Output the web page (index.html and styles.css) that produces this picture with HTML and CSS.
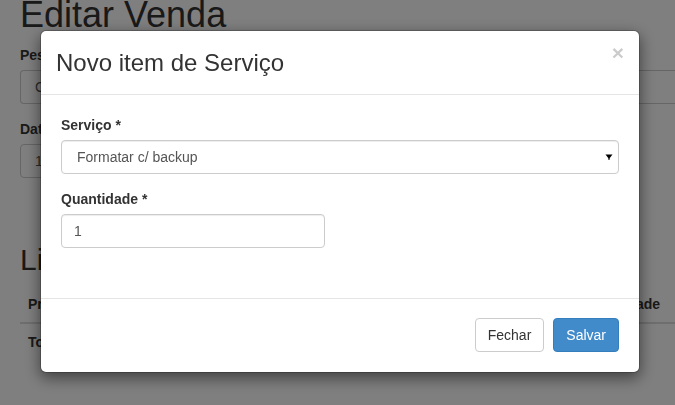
FILE: index.html
```html
<!DOCTYPE html>
<html lang="pt-BR">
<head>
<meta charset="utf-8">
<title>Editar Venda</title>
<link rel="stylesheet" href="styles.css">
</head>
<body>
<div class="page">
  <h1 class="page-title">Editar Venda</h1>
  <div class="form-group">
    <label class="bg-label">Pessoa</label>
    <div class="bg-control bg-wide">Carlos Silva</div>
  </div>
  <div class="form-group">
    <label class="bg-label">Data</label>
    <div class="bg-control bg-narrow">12/05/2017</div>
  </div>
  <h2 class="section-title">Lista de Itens</h2>
  <table class="items">
    <thead>
      <tr><th class="col-prod">Produto</th><th class="col-qtd">Quantidade</th><th class="col-rest"></th></tr>
    </thead>
    <tbody>
      <tr><td class="col-prod"><strong>Total</strong></td><td class="col-qtd"></td><td class="col-rest"></td></tr>
    </tbody>
  </table>
</div>

<div class="backdrop"></div>

<div class="modal">
  <div class="modal-header">
    <h3 class="modal-title">Novo item de Serviço</h3>
    <button type="button" class="close">×</button>
  </div>
  <div class="modal-body">
    <div class="form-group">
      <label class="field-label" for="servico">Serviço *</label>
      <div class="select-wrap">
        <select id="servico" class="form-control select">
          <option>Formatar c/ backup</option>
        </select>
        <svg class="select-arrow" width="8" height="7" viewBox="0 0 8 7" aria-hidden="true">
          <path d="M0.5 0.5H7.5L4 5Z" fill="#000"/>
          <rect x="3.5" y="4" width="1" height="2" fill="#000"/>
        </svg>
      </div>
    </div>
    <div class="form-group">
      <label class="field-label" for="qtd">Quantidade *</label>
      <input id="qtd" class="form-control form-short" type="text" value="1">
    </div>
  </div>
  <div class="modal-footer">
    <button type="button" class="btn btn-default">Fechar</button>
    <button type="button" class="btn btn-primary">Salvar</button>
  </div>
</div>
</body>
</html>
```
FILE: styles.css
```css
* { box-sizing: border-box; }

html, body {
  margin: 0;
  height: 405px;
  overflow: hidden;
}

body {
  background: #fff;
  color: #333;
  font-family: "Liberation Sans", Arial, sans-serif;
  font-size: 14px;
  line-height: 20px;
}

.page {
  padding: 0 0 0 20px;
  width: 675px;
}

.page-title {
  margin: 0 0 15px;
  font-size: 36px;
  font-weight: 500;
  line-height: 30px;
}

.form-group {
  margin-bottom: 15px;
}

.bg-label,
.field-label {
  display: block;
  margin-bottom: 5px;
  font-weight: bold;
  line-height: 20px;
}

.bg-control {
  height: 34px;
  padding: 6px 14px;
  border: 1px solid #ccc;
  border-radius: 4px;
  color: #555;
}

.bg-wide {
  width: 100%;
  border-right-width: 0;
  border-radius: 4px 0 0 4px;
}

.bg-narrow { width: 200px; }

.section-title {
  margin: 65px 0 10px;
  font-size: 30px;
  font-weight: 500;
  line-height: 33px;
}

.items {
  border-collapse: collapse;
  table-layout: fixed;
  width: 100%;
}

.items th,
.items td {
  padding: 8px;
  text-align: left;
  line-height: 20px;
}

.items th {
  border-bottom: 2px solid #ddd;
}

.items td {
  border-top: 1px solid #ddd;
}

.items .col-prod { width: 555px; }
.items .col-qtd { width: 93px; }
.items .col-rest { padding: 0; }

.backdrop {
  position: fixed;
  inset: 0;
  background: rgba(0, 0, 0, 0.5);
}

.modal {
  position: fixed;
  top: 30px;
  left: 40px;
  width: 600px;
  background: #fff;
  background-clip: padding-box;
  border: 1px solid rgba(0, 0, 0, 0.2);
  border-radius: 6px;
  box-shadow: 0 5px 15px rgba(0, 0, 0, 0.5);
}

.modal-header {
  display: flex;
  justify-content: space-between;
  align-items: flex-start;
  padding: 15px;
  border-bottom: 1px solid #e5e5e5;
}

.modal-title {
  margin: 0;
  font-size: 24px;
  font-weight: 500;
  line-height: 33px;
  color: #333;
}

.close {
  margin-top: -4px;
  padding: 0;
  border: 0;
  background: none;
  font-family: "Liberation Sans", Arial, sans-serif;
  font-size: 21px;
  font-weight: bold;
  line-height: 1;
  color: #000;
  opacity: 0.2;
  text-shadow: 0 1px 0 #fff;
}

.modal-body {
  padding: 20px;
}

.form-control {
  display: block;
  width: 100%;
  height: 34px;
  padding: 6px 12px;
  font-family: "Liberation Sans", Arial, sans-serif;
  font-size: 14px;
  line-height: 20px;
  color: #555;
  background: #fff;
  border: 1px solid #ccc;
  border-radius: 4px;
  box-shadow: inset 0 1px 1px rgba(0, 0, 0, 0.075);
}

.select-wrap {
  position: relative;
}

.select {
  appearance: none;
  -webkit-appearance: none;
  padding-left: 15px;
}

.select-arrow {
  position: absolute;
  right: 6px;
  top: 14px;
}

.form-short {
  width: 264px;
}

.modal-footer {
  display: flex;
  justify-content: flex-end;
  gap: 9px;
  margin-top: 15px;
  padding: 19px 20px 20px;
  border-top: 1px solid #e5e5e5;
}

.btn {
  padding: 6px 12px;
  font-family: "Liberation Sans", Arial, sans-serif;
  font-size: 14px;
  line-height: 20px;
  border: 1px solid transparent;
  border-radius: 4px;
}

.btn-default {
  color: #333;
  background: #fff;
  border-color: #ccc;
}

.btn-primary {
  color: #fff;
  background: #428bca;
  border-color: #357ebd;
}
```
